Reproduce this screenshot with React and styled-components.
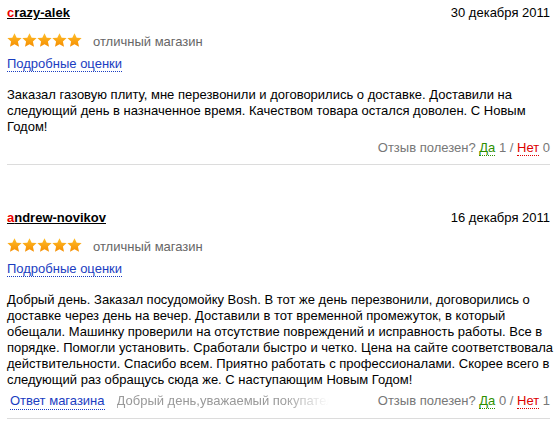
import React from "react";
import styled, { createGlobalStyle } from "styled-components";

const GlobalStyle = createGlobalStyle`
  html, body {
    margin: 0;
    padding: 0;
    background: #fff;
  }
  body {
    font-family: "Liberation Sans", Arial, sans-serif;
    font-size: 13px;
    line-height: 16px;
    color: #000;
  }
`;

// line breaks kept as in the original layout
const reviews = [
  {
    user: "crazy-alek",
    date: "30 декабря 2011",
    rating: 5,
    verdict: "отличный магазин",
    text:
      "Заказал газовую плиту, мне перезвонили и договорились о доставке. Доставили на\n" +
      "следующий день в назначенное время. Качеством товара остался доволен. С Новым\n" +
      "Годом!",
    yes: 1,
    no: 0,
  },
  {
    user: "andrew-novikov",
    date: "16 декабря 2011",
    rating: 5,
    verdict: "отличный магазин",
    text:
      "Добрый день. Заказал посудомойку Bosh. В тот же день перезвонили, договорились о\n" +
      "доставке через день на вечер. Доставили в тот временной промежуток, в который\n" +
      "обещали. Машинку проверили на отсутствие повреждений и исправность работы. Все в\n" +
      "порядке. Помогли установить. Сработали быстро и четко. Цена на сайте соответствовала\n" +
      "действительности. Спасибо всем. Приятно работать с профессионалами. Скорее всего в\n" +
      "следующий раз обращусь сюда же. С наступающим Новым Годом!",
    reply: "Добрый день,уважаемый покупатель!",
    yes: 0,
    no: 1,
  },
];

const Page = styled.div`
  padding: 5px 9px 0 7px;
`;

const Review = styled.div`
  margin-bottom: 45px;
  padding-bottom: 8px;
  border-bottom: 1px solid #dcdcdc;
`;

const Header = styled.div`
  display: flex;
  justify-content: space-between;
  align-items: baseline;
`;

const User = styled.a`
  font-weight: bold;
  color: #000;
  text-decoration: underline;
  cursor: pointer;

  &::first-letter {
    color: #e00;
  }
`;

const DateText = styled.span`
  color: #000;
`;

const RatingRow = styled.div`
  display: flex;
  align-items: center;
  height: 16px;
  margin-top: 13px;
`;

const Stars = styled.div`
  display: flex;
  margin: 0 11px 4px 0;
`;

const Verdict = styled.span`
  color: #666;
`;

const DottedLink = styled.a`
  color: ${(p) => p.$color || "#1a3dc1"};
  border-bottom: 1px dotted ${(p) => p.$color || "#1a3dc1"};
  text-decoration: none;
  cursor: pointer;
`;

const DetailsRow = styled.div`
  margin-top: 6px;
`;

const Body = styled.p`
  margin: 15px 0 0;
  white-space: pre;
`;

const Footer = styled.div`
  display: flex;
  justify-content: space-between;
  align-items: baseline;
  margin-top: 5px;
`;

const ReplyBox = styled.div`
  display: flex;
  align-items: baseline;
  min-width: 0;
  padding-left: 3px;
`;

const Excerpt = styled.span`
  width: 212px;
  margin-left: 12px;
  color: #999;
  white-space: nowrap;
  overflow: hidden;
  -webkit-mask-image: linear-gradient(to right, #000 78%, transparent 100%);
  mask-image: linear-gradient(to right, #000 78%, transparent 100%);
`;

const Useful = styled.div`
  color: #777;
  margin-left: auto;
  white-space: nowrap;
`;

const Star = () => (
  <svg width="15" height="14" viewBox="0 0 24 23">
    <defs>
      <linearGradient id="starFill" x1="0" y1="0" x2="0" y2="1">
        <stop offset="0" stopColor="#ffbf2a" />
        <stop offset="1" stopColor="#f58d00" />
      </linearGradient>
    </defs>
    <polygon
      points="12,0.3 15.6,7.6 23.7,8.4 17.6,14 19.4,22.5 12,18.3 4.6,22.5 6.4,14 0.3,8.4 8.4,7.6"
      fill="url(#starFill)"
    />
  </svg>
);

const ReviewItem = ({ r }) => (
  <Review>
    <Header>
      <User>{r.user}</User>
      <DateText>{r.date}</DateText>
    </Header>
    <RatingRow>
      <Stars>
        {Array.from({ length: r.rating }).map((_, i) => (
          <Star key={i} />
        ))}
      </Stars>
      <Verdict>{r.verdict}</Verdict>
    </RatingRow>
    <DetailsRow>
      <DottedLink>Подробные оценки</DottedLink>
    </DetailsRow>
    <Body>{r.text}</Body>
    <Footer>
      {r.reply && (
        <ReplyBox>
          <DottedLink>Ответ магазина</DottedLink>
          <Excerpt>{r.reply}</Excerpt>
        </ReplyBox>
      )}
      <Useful>
        Отзыв полезен? <DottedLink $color="#2e8f00">Да</DottedLink> {r.yes} /{" "}
        <DottedLink $color="#d00">Нет</DottedLink> {r.no}
      </Useful>
    </Footer>
  </Review>
);

export default function App() {
  return (
    <Page>
      <GlobalStyle />
      {reviews.map((r) => (
        <ReviewItem key={r.user} r={r} />
      ))}
    </Page>
  );
}
